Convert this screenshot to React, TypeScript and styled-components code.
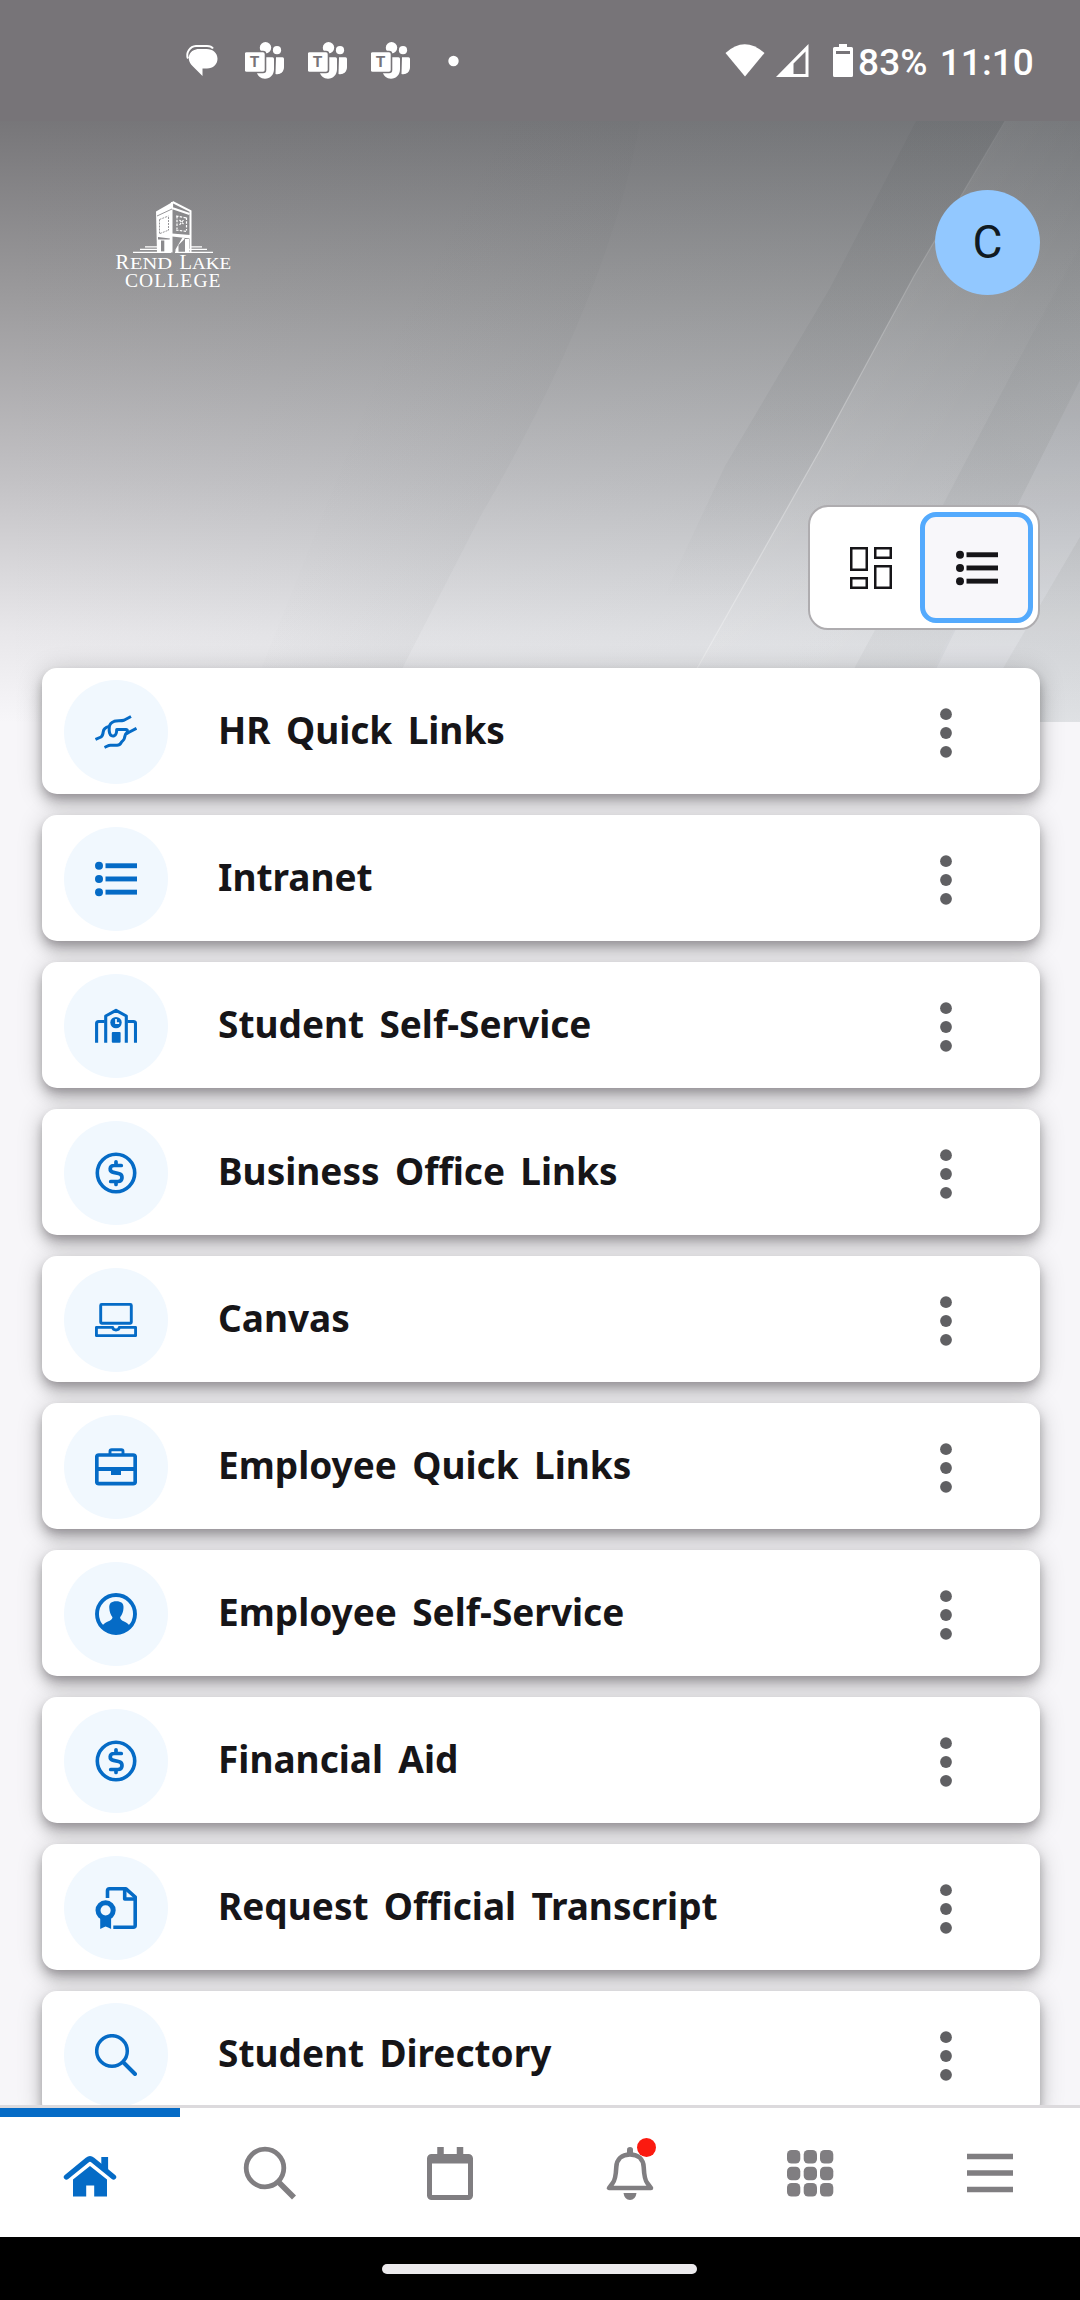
import React from 'react';
import styled, { createGlobalStyle } from 'styled-components';

const BLUE = '#056bc6';
const INK = '#161518';
const MUTED = '#807e81';

const GlobalStyle = createGlobalStyle`
  * { box-sizing: border-box; }
  html, body { margin: 0; padding: 0; background: #f6f5f8; }
  body { font-family: 'Noto Sans', 'Open Sans', sans-serif; color: ${INK}; }
  svg { display: block; flex: none; }
`;

const Screen = styled.div`
  width: 1080px;
  height: 2300px;
  overflow: hidden;
  display: flex;
  flex-direction: column;
`;

const StatusBar = styled.header`
  flex: none;
  height: 121px;
  padding: 0 46px 0 185px;
  display: flex;
  align-items: center;
  justify-content: space-between;
  background: #777478;
  color: #fff;
  font: 500 37px/1 Roboto, sans-serif;
`;

const StatusGroup = styled.div<{ $gap: number }>`
  display: flex;
  align-items: center;
  gap: ${(p) => p.$gap}px;
`;

const StatusText = styled.span<{ $left: number }>`
  margin-left: ${(p) => p.$left}px;
  padding-top: 3px;
  letter-spacing: 0.1px;
`;

const Content = styled.main`
  flex: 1;
  min-height: 0;
  position: relative;
  isolation: isolate;
  overflow: hidden;
  padding: 69px 40px 0 42px;
  background: #f7f6f9;
`;

const Backdrop = styled.svg`
  position: absolute;
  z-index: -1;
  top: 0;
  left: 0;
`;

const BrandRow = styled.div`
  height: 315px;
  display: flex;
  justify-content: space-between;
  align-items: flex-start;
  padding-left: 70px;
`;

const Avatar = styled.div`
  width: 105px;
  height: 105px;
  padding-bottom: 2px;
  border-radius: 50%;
  background: #92c8ff;
  color: #101a22;
  display: flex;
  align-items: center;
  justify-content: center;
  font: 400 46px/1 Roboto, sans-serif;
`;

const LogoWrap = styled.div`
  padding-top: 7px;
  svg { overflow: visible; }
`;

const ViewRow = styled.div`
  display: flex;
  justify-content: flex-end;
  height: 163px;
`;

const ViewToggle = styled.div`
  width: 232px;
  height: 125px;
  padding: 5px;
  display: flex;
  border: 2px solid #aeacaf;
  border-radius: 20px;
  background: #fff;
`;

const ViewButton = styled.button<{ $active?: boolean }>`
  flex: ${(p) => (p.$active ? '0 0 113px' : '1')};
  height: 111px;
  display: flex;
  align-items: center;
  justify-content: center;
  padding: 1px 0 0 ${(p) => (p.$active ? 1 : 6)}px;
  border: ${(p) => (p.$active ? '5px solid #54aafd' : 'none')};
  border-radius: 16px;
  background: ${(p) => (p.$active ? '#f8f7fa' : 'transparent')};
  color: ${INK};
`;

const LinkList = styled.ul`
  list-style: none;
  margin: 0;
  padding: 0;
  display: flex;
  flex-direction: column;
  gap: 21px;
`;

const LinkCard = styled.li`
  height: 126px;
  padding: 0 88px 0 22px;
  display: flex;
  align-items: center;
  border-radius: 15px;
  background: #fff;
  box-shadow:
    0 5px 10px -2px rgba(10, 5, 10, 0.22),
    0 10px 14px rgba(10, 5, 10, 0.16),
    0 3px 26px rgba(10, 5, 10, 0.2);
`;

const IconDisc = styled.span`
  width: 104px;
  height: 104px;
  margin-top: 2px;
  border-radius: 50%;
  display: flex;
  align-items: center;
  justify-content: center;
  background: #f1f8fe;
  color: ${BLUE};
`;

const LinkTitle = styled.span`
  flex: 1;
  margin-left: 50px;
  padding-bottom: 2px;
  font-size: 37px;
  line-height: 50px;
  font-weight: 700;
  word-spacing: 5.700px;
  white-space: nowrap;
`;

const MoreButton = styled.button`
  padding: 3px 0 0;
  border: 0;
  background: none;
  color: #606063;
`;

const TabBar = styled.nav`
  flex: none;
  height: 132px;
  border-top: 3px solid #dcdadd;
  display: flex;
  background: #fff;
`;

const Tab = styled.a<{ $active?: boolean }>`
  position: relative;
  flex: 1;
  display: flex;
  align-items: center;
  justify-content: center;
  padding-bottom: 8px;
  border-top: 9px solid ${(p) => (p.$active ? BLUE : 'transparent')};
  color: ${(p) => (p.$active ? BLUE : MUTED)};
`;

const Badge = styled.span`
  position: absolute;
  top: 21px;
  left: 97px;
  width: 19px;
  height: 19px;
  border-radius: 50%;
  background: #fb1a10;
`;

const GestureBar = styled.div`
  flex: none;
  height: 63px;
  padding: 1px 1px 0 0;
  display: flex;
  align-items: center;
  justify-content: center;
  background: #000;
`;

const GesturePill = styled.span`
  width: 315px;
  height: 10px;
  border-radius: 5px;
  background: #eceaed;
`;

type Glyph = { children: React.ReactNode };

const Icon42 = ({ children }: Glyph) => (
  <svg width="42" height="42" viewBox="0 0 42 42" fill="none" stroke="currentColor">
    {children}
  </svg>
);

const Icon54 = ({ children }: Glyph) => (
  <svg width="54" height="54" viewBox="0 0 54 54" fill="none" stroke="currentColor">
    {children}
  </svg>
);

const HandsIcon = () => (
  <Icon42>
    <g strokeWidth="3" strokeLinejoin="round">
      <path d="M.5 28.500 6 26c1.500-1 2-3 2.200-5 .3-2.800 2.500-4.800 5.800-5.500" />
      <path d="M36 5.500 29 9.300c-3 .8-7 .3-9.800 1-2.800 1-4.700 3.300-4.900 5.700-.2 2-.4 4 .3 6 .8 2.800 2.900 3.600 4.800 2.700 2.300-1 2.300-3.500 2.300-6.200h9.300c1.800 0 1.800 2.400.6 3.500-1.700 1.300-1.700 3.500-2.200 5.200-.5 2.300-2.400 2.800-3.300 4.500-1 1.800-2 2.500-4 2.500h-6.600c-2.200 0-3.500 1.200-6 2.300" />
      <path d="M41.500 17.300 34 21.300l-2.400 1.500" />
    </g>
  </Icon42>
);

const ListIcon = () => (
  <Icon42>
    <g fill="currentColor" stroke="none">
      <circle cx="4" cy="7.800" r="4" />
      <circle cx="4" cy="21" r="4" />
      <circle cx="4" cy="34.200" r="4" />
      <rect x="10.500" y="5.300" width="31.500" height="4.900" />
      <rect x="10.500" y="18.500" width="31.500" height="4.900" />
      <rect x="10.500" y="31.700" width="31.500" height="4.900" />
    </g>
  </Icon42>
);

const DashboardIcon = () => (
  <Icon42>
    <g strokeWidth="2.500">
      <rect x="1.250" y="1.250" width="15.500" height="21.500" />
      <rect x="25.250" y="1.250" width="15.500" height="9.500" />
      <rect x="1.250" y="31.250" width="15.500" height="9.500" />
      <rect x="25.250" y="19.250" width="15.500" height="21.500" />
    </g>
  </Icon42>
);

const SchoolIcon = () => (
  <Icon42>
    <g strokeWidth="3.100" strokeLinejoin="round">
      <path d="M1.600 37.700V18.500q0-2 2-2h6" />
      <path d="M10.700 37.700V11L21 5.300 31.300 11v26.700" />
      <path d="M32.500 16.500h6q2 0 2 2v19.200" />
    </g>
    <circle cx="21" cy="17.600" r="5.700" fill="currentColor" stroke="none" />
    <path d="M21 14v4.200h3.200" stroke="#f1f8fe" strokeWidth="1.700" />
    <rect x="16.800" y="27" width="8.800" height="10.700" rx="1" fill="currentColor" stroke="none" />
  </Icon42>
);

const DollarIcon = () => (
  <Icon42>
    <circle cx="21" cy="21" r="18.700" strokeWidth="3.600" />
    <path
      d="M26.300 13.500h-7c-5.300 0-5.300 6-.8 6.900l5 1.100c5 1 4.500 8-.6 8h-7.200M21 9.800v3.700M21 29.500v3"
      strokeWidth="3.700"
      strokeLinecap="round"
    />
  </Icon42>
);

const LaptopIcon = () => (
  <Icon42>
    <g strokeWidth="2.900" strokeLinejoin="round">
      <rect x="5.700" y="5.400" width="30.600" height="18.800" rx="1" />
      <path d="M1.400 28.400h16.300c.3 2 1.500 2.600 3.300 2.600s3-.6 3.300-2.600h16.300v8.200H1.400z" />
    </g>
  </Icon42>
);

const BriefcaseIcon = () => (
  <Icon42>
    <rect x="1.800" y="9" width="38.400" height="28.600" rx="2" strokeWidth="3.700" />
    <path d="M15 8.500V5.400Q15 3.700 16.700 3.700h9.600Q28 3.700 28 5.400v3.100" strokeWidth="2.900" />
    <path d="M2 23h38" strokeWidth="3.800" />
    <rect x="16" y="24" width="10" height="5" fill="currentColor" stroke="none" />
  </Icon42>
);

const PersonIcon = () => (
  <Icon42>
    <circle cx="21" cy="21" r="19" strokeWidth="3.900" />
    <path
      d="M14.300 15c-.4-4.800 2.200-6.800 7-6.800s7.600 2 7.200 6.800c-.2 3.700-1.300 6.800-3.400 9.200.2 2.300 1.600 3 4 4.300 2.800 1.400 5 2.900 6.400 5.500-3.600 5-8.600 7-14.500 7S10 39 6.500 34c1.400-2.600 3.600-4.100 6.400-5.500 2.700-1.300 4.300-2 4.600-4.300-2-2.400-3-5.500-3.200-9.200z"
      fill="currentColor"
      stroke="none"
    />
  </Icon42>
);

const CertificateIcon = () => (
  <Icon42>
    <g strokeWidth="3.600" strokeLinejoin="round">
      <path d="M12.500 11V3.800q0-2 2-2H31L40.200 10v28.200q0 2-2 2H18.300" />
      <path d="M29.700 2.500V12H40" />
    </g>
    <circle cx="10.600" cy="23.300" r="7.600" strokeWidth="5" />
    <path d="M5.200 31h10.900v11l-3-1.600-2.500-1-2.400 1-3 1.600z" fill="currentColor" stroke="none" />
  </Icon42>
);

const SearchIcon = () => (
  <Icon42>
    <circle cx="17" cy="17" r="15.300" strokeWidth="3.500" />
    <path d="M28.500 28.500 40 40" strokeWidth="4" strokeLinecap="round" />
  </Icon42>
);

const MoreIcon = () => (
  <svg width="12" height="50" viewBox="0 0 12 50" fill="currentColor">
    <circle cx="6" cy="6.200" r="5.900" />
    <circle cx="6" cy="25" r="5.900" />
    <circle cx="6" cy="43.800" r="5.900" />
  </svg>
);

const HomeTab = () => (
  <Icon54>
    <path d="M3.500 31 24.500 13.900q2.500-2 5 0L50.500 31" strokeWidth="5.400" strokeLinecap="round" />
    <path d="M38.300 11h6.800v16.500l-6.800-5.500z" fill="currentColor" stroke="none" />
    <path d="M10 33.500 27 20l17 13.500V50.500H31.200V39.500h-8v11H10z" fill="currentColor" stroke="none" />
  </Icon54>
);

const SearchTab = () => (
  <Icon54>
    <circle cx="22" cy="22" r="18.800" strokeWidth="4.800" />
    <path d="M36 36.500 51 51.500" strokeWidth="5.600" />
  </Icon54>
);

const CalendarTab = () => (
  <Icon54>
    <rect x="6.500" y="10.500" width="41" height="41" rx="2" strokeWidth="5" />
    <path d="M6.500 13.500h41" strokeWidth="8" />
    <path d="M17.500 1v8M37 1v8" strokeWidth="6.500" />
  </Icon54>
);

const BellTab = () => (
  <Icon54>
    <path
      d="M27 8.500c-8.500 0-13.300 5-13.700 12.500-.4 8.500-1 13.500-3.800 16.300L6 42h42l-3.500-4.700c-2.800-2.800-3.400-7.800-3.800-16.300C40.300 13.500 35.500 8.500 27 8.500z"
      strokeWidth="4.600"
      strokeLinejoin="round"
    />
    <path d="M24 8V3.500q0-2.500 3-2.500t3 2.500V8z" fill="currentColor" stroke="none" />
    <path d="M20.500 47h13q-1 7-6.500 7t-6.500-7z" fill="currentColor" stroke="none" />
  </Icon54>
);

const GridTab = () => (
  <Icon54>
    {[4, 20.700, 37].map((y) =>
      [4, 20.700, 37].map((x) => (
        <rect key={`${x}-${y}`} x={x} y={y} width="13.300" height="13.600" rx="4.500" fill="currentColor" stroke="none" />
      )),
    )}
  </Icon54>
);

const MenuTab = () => (
  <Icon54>
    <path d="M4 10.500h46M4 27h46M4 43.500h46" strokeWidth="5.400" />
  </Icon54>
);

const ChatGlyph = () => (
  <svg width="33" height="32" viewBox="0 0 33 32">
    <path d="M3 13.500C.5 7.500 5 1.500 11 1h11c3 0 5 1 6 2.500" fill="none" stroke="#fff" strokeWidth="2" />
    <path d="M14 4h7.500C28 4 32.500 8 32.500 13.700S28 23.500 22 23.500h-4.500V31L7.500 21C0 13 5 4 14 4z" fill="#fff" />
  </svg>
);

const TeamsGlyph = () => (
  <svg width="39" height="37" viewBox="0 0 39 37" fill="#fff">
    <circle cx="20.500" cy="5.800" r="5.700" />
    <circle cx="32" cy="8.200" r="4.100" />
    <path d="M31 15.300h6.500q1.500 0 1.500 1.500V25c0 5-4 8-8.500 7z" />
    <path d="M13 15.300h14.500q1.500 0 1.500 1.500V27c0 6-4 9.700-9 9.700-4.500 0-7.500-3-8.500-7z" />
    <rect x="-1" y="9.500" width="21.500" height="21" rx="2.500" stroke="#777478" strokeWidth="1.600" />
    <text x="9.600" y="25.400" textAnchor="middle" fontFamily="Roboto, sans-serif" fontSize="15.500" fontWeight="700" fill="#777478">
      T
    </text>
  </svg>
);

const Logo = () => (
  <svg width="124" height="92" viewBox="0 0 124 92" fill="#fff">
    <path d="M44 14.500 60.500 5v50.500H45z" />
    <path d="M60.500 5 78.500 14v41.500" fill="none" stroke="#fff" strokeWidth="2" />
    <path d="M60 5v6l17.500 6" fill="none" stroke="#fff" strokeWidth="2.200" />
    <g stroke="#8b8a8d" strokeWidth=".9" fill="none">
      <path d="M45 19 60 12" />
      <path d="M47.500 22.500v14M56.500 20v13M47.500 22.500l9-3.500M48 36.500l9-3.500" strokeDasharray="2 1" />
    </g>
    <path d="M65 19v13M74.500 20.500v13M64 19l11 2M64 33l11 1.500M67.500 23l4 4M71.500 23l-4 5" stroke="#fff" strokeWidth="1.200" strokeDasharray="2.500 1.300" />
    <path d="M60 36.500 78 38v3.500l-18-2z" />
    <path d="M49 43.500h3.300v11H49zM46 40l12 1.500-.5 1H46z" fill="#8b8a8d" />
    <path d="M63.500 55.500v-3l7-12h2v1.500l-6 6v7.500zM73 42h4v13.500h-4z" />
    <path d="M21 55.300h38M28 52.400h17M33 49.800h12M63 55.300h38M77 52.400h18M78 49.800h12" stroke="#fff" strokeWidth="1.200" />
    <g fontFamily="'Liberation Serif', serif">
      <text x="3.500" y="71.500" fontSize="20.500">R</text>
      <text x="18" y="71.500" fontSize="17.500" textLength="42" lengthAdjust="spacingAndGlyphs">END</text>
      <text x="67.500" y="71.500" fontSize="20.500">L</text>
      <text x="80" y="71.500" fontSize="17.500" textLength="39" lengthAdjust="spacingAndGlyphs">AKE</text>
      <text x="13" y="89.500" textLength="95.500" lengthAdjust="spacing" fontSize="19.500">COLLEGE</text>
    </g>
  </svg>
);

const HeroArt = () => (
  <Backdrop width="1080" height="601" viewBox="0 121 1080 601">
    <defs>
      <linearGradient id="fade" x1="0" y1="0" x2="0" y2="1">
        <stop offset="0" stopColor="#777679" />
        <stop offset=".28" stopColor="#9a999b" />
        <stop offset=".6" stopColor="#c3c2c5" />
        <stop offset=".85" stopColor="#e8e7ea" />
        <stop offset="1" stopColor="#f7f6f9" />
      </linearGradient>
      <linearGradient id="side" x1="0" y1="0" x2="1" y2="0">
        <stop offset="0" stopColor="#5a7478" stopOpacity="0" />
        <stop offset=".35" stopColor="#5a7478" stopOpacity=".05" />
        <stop offset="1" stopColor="#5a7478" stopOpacity=".11" />
      </linearGradient>
      <linearGradient id="band" x1="0" y1="0" x2="0" y2="1">
        <stop offset="0" stopColor="#404648" stopOpacity=".07" />
        <stop offset=".5" stopColor="#404648" stopOpacity=".06" />
        <stop offset=".8" stopColor="#505658" stopOpacity="0" />
      </linearGradient>
      <linearGradient id="bandRight" x1="1" y1="0" x2=".45" y2=".9">
        <stop offset="0" stopColor="#505658" stopOpacity=".01" />
        <stop offset=".5" stopColor="#505658" stopOpacity=".06" />
        <stop offset="1" stopColor="#505658" stopOpacity=".05" />
      </linearGradient>
      <linearGradient id="shade" gradientUnits="userSpaceOnUse" x1="330" y1="440" x2="490" y2="520">
        <stop offset="0" stopColor="#505658" stopOpacity="0" />
        <stop offset="1" stopColor="#505658" stopOpacity=".04" />
      </linearGradient>
      <linearGradient id="glint" gradientUnits="userSpaceOnUse" x1="0" y1="121" x2="0" y2="722">
        <stop offset="0" stopColor="#fff" stopOpacity=".04" />
        <stop offset=".5" stopColor="#fff" stopOpacity=".28" />
        <stop offset="1" stopColor="#fff" stopOpacity=".3" />
      </linearGradient>
      <linearGradient id="sheen" gradientUnits="userSpaceOnUse" x1="820" y1="450" x2="960" y2="520">
        <stop offset="0" stopColor="#fff" stopOpacity=".05" />
        <stop offset="1" stopColor="#fff" stopOpacity="0" />
      </linearGradient>
    </defs>
    <rect y="121" width="1080" height="601" fill="url(#fade)" />
    <rect y="121" width="1080" height="601" fill="url(#side)" />
    <path d="M916 121h89L914 276 820 450 699 665 665 722h-60L725 466 830 288z" fill="url(#band)" />
    <path d="M1005 121h75v210l-46 0L945 501 856 665 830 722H665L699 665 820 450 914 276z" fill="url(#sheen)" />
    <path d="M1005 121 914 276 820 450 699 665 665 722" fill="none" stroke="url(#glint)" strokeWidth="1.200" />
    <path d="M640 121C620 240 560 380 480 517L404 665 378 722H240L480 121z" fill="url(#shade)" />
    <path d="M1080 245 1034 331 945 501 856 665 830 722h80L1000 540 1080 380z" fill="url(#bandRight)" />
    <path d="M1080 537 1005 665 975 722h105z" fill="#5a6468" fillOpacity=".05" />
    <path d="M1080 380 1000 540 905 722h70L1005 665 1080 537z" fill="#e8f0ff" fillOpacity=".06" />
  </Backdrop>
);

const links = [
  { title: 'HR Quick Links', Icon: HandsIcon },
  { title: 'Intranet', Icon: ListIcon },
  { title: 'Student Self-Service', Icon: SchoolIcon },
  { title: 'Business Office Links', Icon: DollarIcon },
  { title: 'Canvas', Icon: LaptopIcon },
  { title: 'Employee Quick Links', Icon: BriefcaseIcon },
  { title: 'Employee Self-Service', Icon: PersonIcon },
  { title: 'Financial Aid', Icon: DollarIcon },
  { title: 'Request Official Transcript', Icon: CertificateIcon },
  { title: 'Student Directory', Icon: SearchIcon },
];

const tabs = [
  { id: 'home', Icon: HomeTab, active: true },
  { id: 'search', Icon: SearchTab },
  { id: 'calendar', Icon: CalendarTab },
  { id: 'alerts', Icon: BellTab, badge: true },
  { id: 'apps', Icon: GridTab },
  { id: 'menu', Icon: MenuTab },
];

export default function App() {
  return (
    <Screen>
      <GlobalStyle />
      <StatusBar>
        <StatusGroup $gap={27}>
          <ChatGlyph />
          <StatusGroup $gap={24}>
            <TeamsGlyph />
            <TeamsGlyph />
            <TeamsGlyph />
          </StatusGroup>
          <svg width="60" height="12" viewBox="0 0 60 12">
            <circle cx="16.500" cy="6" r="5.200" fill="#fff" />
          </svg>
        </StatusGroup>
        <StatusGroup $gap={0}>
          <svg width="128" height="36" viewBox="0 0 128 36" fill="#fff">
            <path d="M.5 10Q19.500-7.500 39.500 10L20 33.500z" />
            <path d="M83.500 1v33H51zM80.500 8.500 68.500 20.500V31h12z" fillRule="evenodd" />
            <path d="M114 1h8v3h4.500q1.500 0 1.500 1.500v27q0 1.500-1.500 1.500h-17q-1.500 0-1.500-1.500v-27Q108 4 109.500 4h4.500zM111 8v3h14V8z" fillRule="evenodd" />
          </svg>
          <StatusText $left={5}>83%</StatusText>
          <StatusText $left={12}>11:10</StatusText>
        </StatusGroup>
      </StatusBar>

      <Content>
        <HeroArt />
        <BrandRow>
          <LogoWrap>
            <Logo />
          </LogoWrap>
          <Avatar>C</Avatar>
        </BrandRow>
        <ViewRow>
          <ViewToggle>
            <ViewButton aria-label="Card view">
              <DashboardIcon />
            </ViewButton>
            <ViewButton aria-label="List view" $active>
              <ListIcon />
            </ViewButton>
          </ViewToggle>
        </ViewRow>
        <LinkList>
          {links.map(({ title, Icon }) => (
            <LinkCard key={title}>
              <IconDisc>
                <Icon />
              </IconDisc>
              <LinkTitle>{title}</LinkTitle>
              <MoreButton aria-label="More options">
                <MoreIcon />
              </MoreButton>
            </LinkCard>
          ))}
        </LinkList>
      </Content>

      <TabBar>
        {tabs.map(({ id, Icon, active, badge }) => (
          <Tab key={id} $active={active}>
            <Icon />
            {badge && <Badge />}
          </Tab>
        ))}
      </TabBar>
      <GestureBar>
        <GesturePill />
      </GestureBar>
    </Screen>
  );
}
